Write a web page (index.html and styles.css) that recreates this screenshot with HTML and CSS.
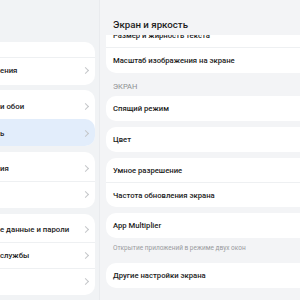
FILE: index.html
```html
<!DOCTYPE html>
<html lang="ru">
<head>
    <meta charset="UTF-8">
    <title>Экран и яркость</title>
    <link rel="stylesheet" href="styles.css">
</head>
<body>
    <div class="screen">
        <aside class="sidebar">
            <div class="group first">
                <div class="row short"></div>
                <div class="row"><span>ения</span><i class="chev"></i></div>
            </div>
            <div class="group">
                <div class="row"><span>и обои</span><i class="chev"></i></div>
                <div class="row active"><span>ь</span><i class="chev"></i></div>
            </div>
            <div class="group">
                <div class="row"><span>ия</span><i class="chev"></i></div>
                <div class="row"><span></span><i class="chev"></i></div>
            </div>
            <div class="group last">
                <div class="row"><span>е данные и пароли</span><i class="chev"></i></div>
                <div class="row"><span>службы</span><i class="chev"></i></div>
                <div class="row"><span></span><i class="chev"></i></div>
            </div>
        </aside>

        <main class="detail">
            <h1 class="title">Экран и яркость</h1>
            <div class="scroll">
                <div class="content">
                    <div class="card">
                        <div class="item cut">Размер и жирность текста</div>
                        <div class="item">Масштаб изображения на экране</div>
                    </div>

                    <div class="section">ЭКРАН</div>
                    <div class="card">
                        <div class="item">Спящий режим</div>
                    </div>
                    <div class="card">
                        <div class="item">Цвет</div>
                    </div>
                    <div class="card double">
                        <div class="item">Умное разрешение</div>
                        <div class="item">Частота обновления экрана</div>
                    </div>
                    <div class="card">
                        <div class="item">App Multiplier</div>
                    </div>
                    <div class="hint">Открытие приложений в режиме двух окон</div>
                    <div class="card">
                        <div class="item">Другие настройки экрана</div>
                    </div>
                </div>
            </div>
        </main>
    </div>
</body>
</html>
```

FILE: styles.css
```css
body {
    margin: 0;
    font-family: Roboto, "Noto Sans", sans-serif;
    color: #1b1b1b;
    background-color: #f1f3f5;
}

.screen {
    display: flex;
    width: 300px;
    height: 300px;
    overflow: hidden;
}

/* левая колонка со списком разделов */
.sidebar {
    width: 95px;
    flex-shrink: 0;
    padding-top: 42px;
    margin-right: 4px;
}

.group {
    background-color: #fff;
    border-radius: 0 10px 10px 0;
    padding: 4px 0 1px;
    margin-bottom: 6px;
}

.group.first {
    padding: 0 0 2px;
    margin-bottom: 5px;
}

.group.last {
    padding-top: 3px;
}

.row {
    display: flex;
    align-items: center;
    justify-content: space-between;
    height: 25px;
    padding-right: 7px;
    font-size: 7.8px;
    font-weight: 500;
    white-space: nowrap;
    border-top: 1px solid #eef0f2;
}

.row:first-child {
    border-top: none;
}

.row.short {
    height: 15px;
}

.row.active {
    background-color: #e2edfb;
    border-radius: 0 10px 10px 0;
    border-top-color: transparent;
    margin-bottom: -1px;
    height: 26px;
}

.chev {
    width: 4px;
    height: 4px;
    border-top: 1px solid #c4c6c9;
    border-right: 1px solid #c4c6c9;
    transform: rotate(45deg);
}

/* правая колонка */
.detail {
    flex: 1;
    display: flex;
    flex-direction: column;
    border-left: 1px solid #e9ebee;
    background-color: #f3f4f6;
    padding-left: 6px;
}

.title {
    margin: 0;
    padding: 18px 0 3px 7px;
    line-height: 14px;
    font-size: 9.7px;
    font-weight: 500;
}

.scroll {
    flex: 1;
    overflow: hidden;
}

/* список прокручен: верхний пункт уходит под заголовок */
.content {
    margin-top: -12px;
    margin-right: -10px;
}

.card {
    background-color: #fff;
    border-radius: 10px;
    margin-bottom: 6px;
}

.item {
    display: flex;
    align-items: center;
    height: 25px;
    padding-left: 7px;
    font-size: 7.7px;
    font-weight: 500;
    border-top: 1px solid #eef0f2;
}

.item:first-child {
    border-top: none;
}

.item.cut {
    height: 24px;
}

.double .item {
    height: 24px;
}

.section {
    font-size: 7.5px;
    line-height: 10px;
    color: #8d8f92;
    padding: 3px 0 4px 7px;
}

.hint {
    font-size: 6.5px;
    line-height: 10px;
    color: #999b9e;
    margin-top: -1px;
    padding: 0 0 10px 7px;
}
```
